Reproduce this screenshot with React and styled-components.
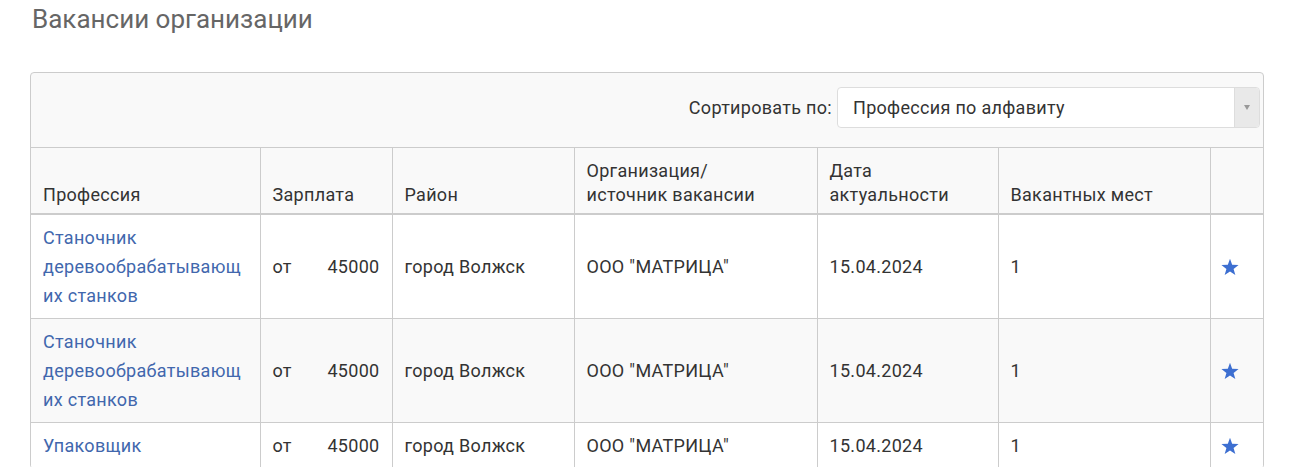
import React from 'react';
import styled, { createGlobalStyle } from 'styled-components';

const GlobalStyle = createGlobalStyle`
    html, body {
        margin: 0;
        padding: 0;
        background: #fff;
    }

    body {
        font-family: Roboto, "Liberation Sans", sans-serif;
        color: #333;
    }
`;

const Page = styled.div`
    padding: 4px 30px 0 30px;
    width: 1234px;
`;

const Title = styled.h1`
    color: #666;
    font-size: 26px;
    font-weight: 400;
    line-height: 31px;
    margin: 0 0 37px 2px;
`;

const Panel = styled.div`
    border: 1px solid #ccc;
    border-radius: 4px;
    background: #f9f9f9;
    overflow: hidden;
`;

const Toolbar = styled.div`
    align-items: center;
    display: flex;
    gap: 5px;
    justify-content: flex-end;
    padding: 14px 3px 19px 12px;
`;

const SortLabel = styled.label`
    font-size: 18px;
    letter-spacing: 0.3px;
    line-height: 24px;
`;

const Select = styled.div`
    background: #fff;
    border: 1px solid #ddd;
    border-radius: 4px;
    box-sizing: border-box;
    display: flex;
    height: 41px;
    width: 423px;
`;

const SelectValue = styled.span`
    align-self: center;
    flex: 1;
    font-size: 18px;
    letter-spacing: 0.3px;
    padding-left: 15px;
`;

const SelectArrow = styled.span`
    align-items: center;
    background: #e9e9e9;
    border-left: 1px solid #ddd;
    border-radius: 0 3px 3px 0;
    display: flex;
    justify-content: center;
    width: 24px;

    &::after {
        border-left: 3px solid transparent;
        border-right: 3px solid transparent;
        border-top: 5px solid #999;
        content: '';
    }
`;

const Table = styled.table`
    border-collapse: collapse;
    font-size: 18px;
    letter-spacing: 0.3px;
    table-layout: fixed;
    width: 100%;
`;

const HeadCell = styled.th`
    border-left: 1px solid #ccc;
    border-top: 1px solid #ccc;
    border-bottom: 2px solid #ccc;
    font-weight: 400;
    line-height: 24px;
    padding: 11px 12px 6px 12px;
    text-align: left;
    vertical-align: bottom;

    &:first-child {
        border-left: none;
    }
`;

const Row = styled.tr`
    background: ${props => (props.$striped ? '#f9f9f9' : '#fff')};
`;

const Cell = styled.td`
    border-left: 1px solid #ccc;
    border-top: 1px solid #ccc;
    line-height: 29px;
    overflow-wrap: break-word;
    padding: 8px 12px;
    vertical-align: middle;

    &:first-child {
        border-left: none;
    }
`;

const ProfLink = styled.a`
    color: #4167ad;
    text-decoration: none;
`;

const Salary = styled.div`
    display: flex;
    justify-content: space-between;
`;

const StarCell = styled(Cell)`
    padding-left: 9px;
`;

const Star = styled.svg`
    display: block;
    fill: #3d6fd1;
    height: 20px;
    width: 20px;
`;

const columns = [
    { title: 'Профессия', width: 229 },
    { title: 'Зарплата', width: 132 },
    { title: 'Район', width: 182 },
    { title: ['Организация/', 'источник вакансии'], width: 243 },
    { title: ['Дата', 'актуальности'], width: 181 },
    { title: 'Вакантных мест', width: 212 },
    { title: '', width: 53 },
];

const vacancies = [
    { profession: 'Станочник деревообрабатывающих станков', salary: '45000' },
    { profession: 'Станочник деревообрабатывающих станков', salary: '45000' },
    { profession: 'Упаковщик', salary: '45000' },
];

const StarIcon = () => (
    <Star viewBox="0 0 24 24">
        <polygon points="12,2 14.6,9.2 22.3,9.5 16.3,14.3 18.4,21.7 12,17.4 5.6,21.7 7.7,14.3 1.7,9.5 9.4,9.2" />
    </Star>
);

const App = () => (
    <Page>
        <GlobalStyle />
        <Title>Вакансии организации</Title>
        <Panel>
            <Toolbar>
                <SortLabel>Сортировать по:</SortLabel>
                <Select>
                    <SelectValue>Профессия по алфавиту</SelectValue>
                    <SelectArrow />
                </Select>
            </Toolbar>
            <Table>
                <colgroup>
                    {columns.map((col, i) => (
                        <col key={i} style={{ width: col.width }} />
                    ))}
                </colgroup>
                <thead>
                    <tr>
                        {columns.map((col, i) => (
                            <HeadCell key={i}>
                                {Array.isArray(col.title)
                                    ? col.title.map((line, j) => (
                                          <React.Fragment key={j}>
                                              {j > 0 && <br />}
                                              {line}
                                          </React.Fragment>
                                      ))
                                    : col.title}
                            </HeadCell>
                        ))}
                    </tr>
                </thead>
                <tbody>
                    {vacancies.map((item, i) => (
                        <Row key={i} $striped={i % 2 === 1}>
                            <Cell>
                                <ProfLink href="#">{item.profession}</ProfLink>
                            </Cell>
                            <Cell>
                                <Salary>
                                    <span>от</span>
                                    <span>{item.salary}</span>
                                </Salary>
                            </Cell>
                            <Cell>город Волжск</Cell>
                            <Cell>ООО "МАТРИЦА"</Cell>
                            <Cell>15.04.2024</Cell>
                            <Cell>1</Cell>
                            <StarCell>
                                <StarIcon />
                            </StarCell>
                        </Row>
                    ))}
                </tbody>
            </Table>
        </Panel>
    </Page>
);

export default App;
